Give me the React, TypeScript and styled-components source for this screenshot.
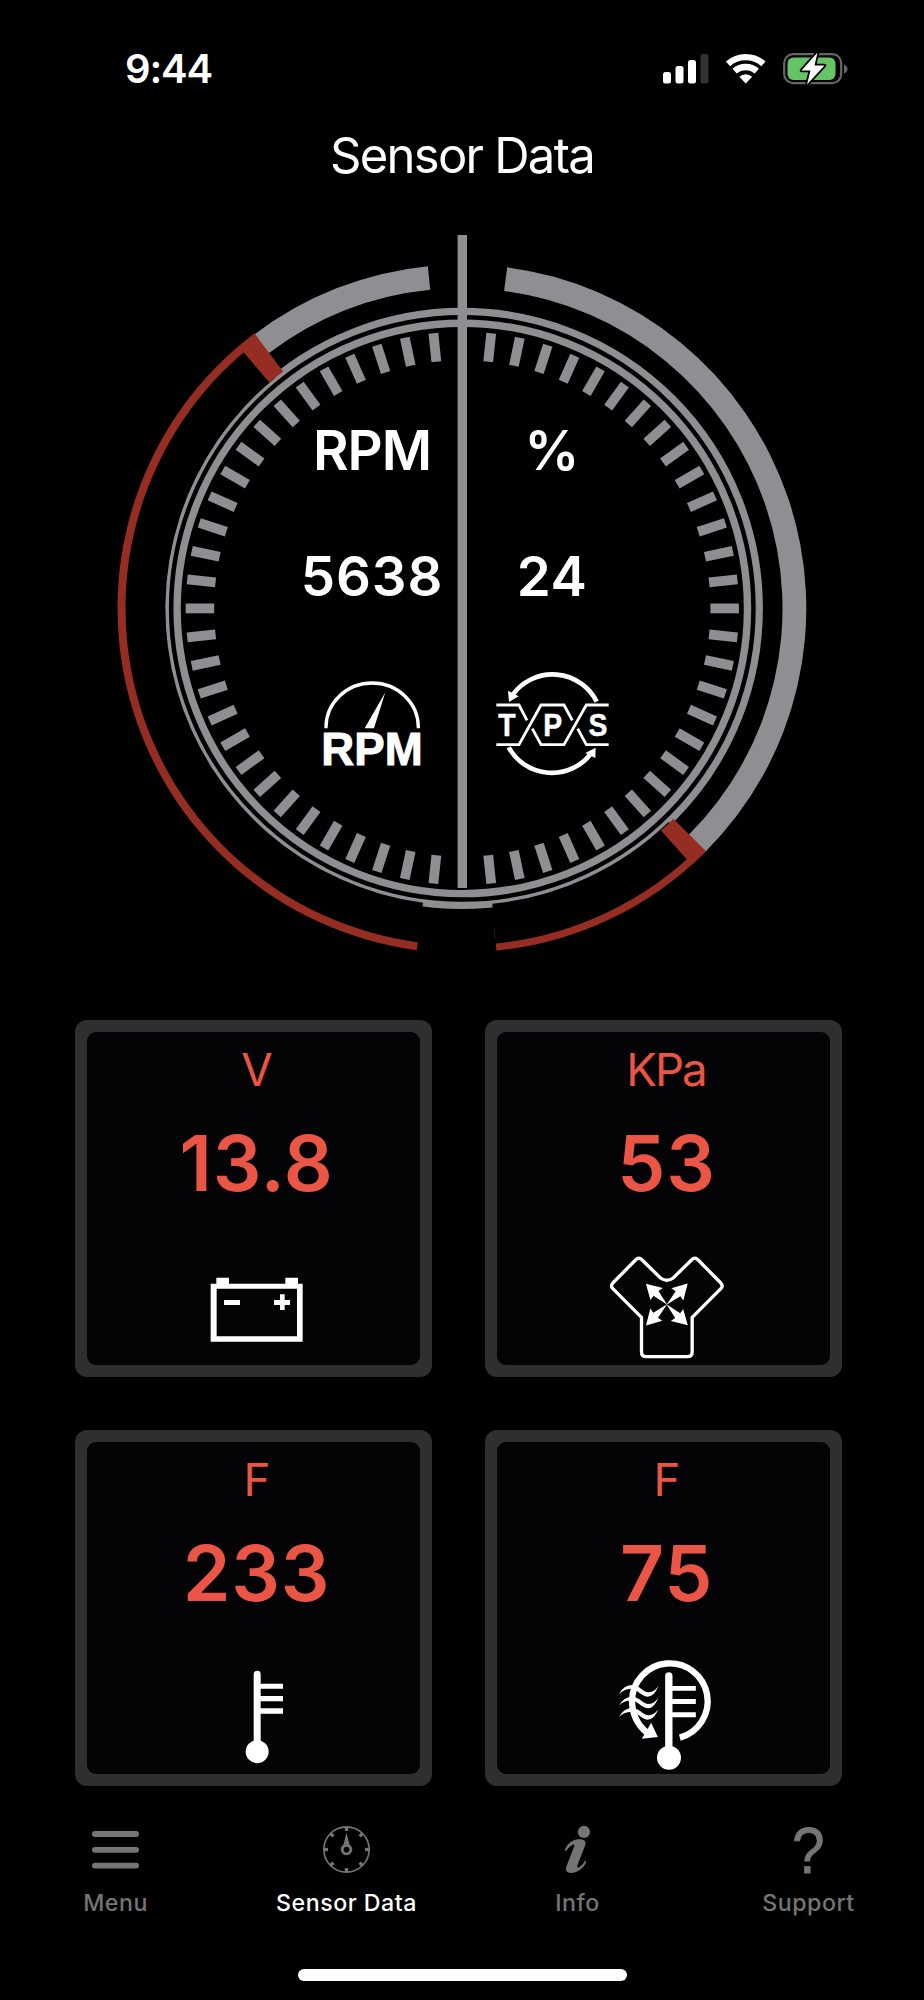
import React from "react";
import styled, { createGlobalStyle } from "styled-components";

const GRAY = "#8e8e93";
const RED = "#962d22";
const CORAL = "#eb5545";
const MUTED = "#757575";

const GlobalStyle = createGlobalStyle`
  body { margin: 0; background: #000; }
  * { box-sizing: border-box; }
  svg { display: block; overflow: visible; }
`;

const Screen = styled.main`
  width: 924px;
  height: 2000px;
  display: flex;
  flex-direction: column;
  overflow: hidden;
  background: #000;
  color: #fff;
  font-family: Inter, "Liberation Sans", sans-serif;
`;

const StatusBar = styled.header`
  height: 125px;
  padding: 12px 76px 0 125px;
  display: flex;
  align-items: center;
  justify-content: space-between;
`;

const Clock = styled.time`
  font-size: 40px;
  font-weight: 600;
  letter-spacing: -1.2px;
`;

const Title = styled.h1`
  margin: 0;
  height: 60px;
  line-height: 61px;
  text-align: center;
  font-size: 49px;
  font-weight: 400;
  letter-spacing: -1.75px;
`;

const GaugeArea = styled.section`
  height: 835px;
  display: grid;
  justify-items: center;
  & > * { grid-area: 1 / 1; }
`;

const Readouts = styled.div`
  display: flex;
  padding-top: 230px;
`;

const Readout = styled.div`
  width: 180px;
  display: flex;
  flex-direction: column;
  align-items: center;
`;

const ReadoutText = styled.div<{ $after: number; $track: number }>`
  height: 70px;
  line-height: 70px;
  margin-bottom: ${(p) => p.$after}px;
  font-size: 54.6px;
  font-weight: 600;
  letter-spacing: ${(p) => p.$track}px;
  white-space: nowrap;
`;

const Cards = styled.section`
  display: grid;
  grid-template-columns: 357px 357px;
  grid-template-rows: 357px 356px;
  gap: 53px;
  padding-left: 75px;
  margin-bottom: 1px;
`;

const Card = styled.article`
  padding: 12px;
  border-radius: 12px;
  background: #2f2f2f;
`;

const CardFace = styled.div`
  height: 100%;
  padding: 12px 0 0 7px;
  border-radius: 9px;
  background: #040406;
  color: ${CORAL};
  display: flex;
  flex-direction: column;
  align-items: center;
`;

const Unit = styled.div`
  height: 52px;
  line-height: 52px;
  font-size: 45.6px;
  letter-spacing: -2px;
  text-indent: -2px;
`;

const Value = styled.div`
  height: 135px;
  line-height: 135px;
  margin-bottom: 19px;
  font-size: 76.6px;
  font-weight: 600;
  letter-spacing: 0.8px;
  text-indent: -0.8px;
`;

const TabBar = styled.nav`
  flex: 1;
  display: flex;
  flex-direction: column;
  align-items: center;
`;

const Tabs = styled.div`
  width: 100%;
  padding-top: 39px;
  display: grid;
  grid-template-columns: repeat(4, 1fr);
`;

const Tab = styled.a<{ $active?: boolean }>`
  display: flex;
  flex-direction: column;
  align-items: center;
  gap: 15px;
  color: ${(p) => (p.$active ? "#fff" : MUTED)};
  font-size: 23.2px;
  font-weight: 500;
  line-height: 30px;
  letter-spacing: 0.5px;
`;

const HomeIndicator = styled.div`
  width: 329px;
  height: 12px;
  margin: auto 0 19px;
  border-radius: 6px;
  background: #fff;
`;

const CX = 462.3;
const CY = 608.4;

// Point on the dial; angles run clockwise from twelve o'clock.
const at = (deg: number, r: number) => {
  const a = (deg * Math.PI) / 180;
  return `${(CX + r * Math.sin(a)).toFixed(2)} ${(CY - r * Math.cos(a)).toFixed(2)}`;
};

// Ring segment between two angles and two radii.
const band = (from: number, to: number, inner: number, outer: number) => {
  const big = Math.abs(to - from) > 180 ? 1 : 0;
  const cw = to > from ? 1 : 0;
  return `M${at(from, outer)}A${outer} ${outer} 0 ${big} ${cw} ${at(to, outer)}L${at(to, inner)}A${inner} ${inner} 0 ${big} ${1 - cw} ${at(from, inner)}Z`;
};

const tickAngles = Array.from({ length: 60 }, (_, i) => i * 6).filter((a) => a % 180 !== 0);

function Dial() {
  return (
    <svg width="924" height="835" viewBox="0 185 924 835">
      <circle cx={CX} cy={CY} r="285.2" fill="none" stroke={GRAY} strokeWidth="7.4" />
      <circle cx={CX} cy={CY} r="297" fill="none" stroke={GRAY} strokeWidth="7.2" />
      <path d={band(136, 174.2, 296.9, 336)} fill="#000" />
      <path d={band(-39, -172.4, 296.9, 336)} fill="#000" />
      {tickAngles.map((a) => (
        <rect
          key={a}
          x={CX - 4.9}
          y={CY - 276.6}
          width="9.8"
          height="28.5"
          fill={GRAY}
          transform={`rotate(${a} ${CX} ${CY})`}
        />
      ))}
      <path d={band(7.5, 135, 320.2, 344)} fill={GRAY} />
      <path d={band(-5.75, -37.2, 320.2, 344)} fill={GRAY} />
      <path d={band(135, 174.3, 336.8, 344)} fill={RED} />
      <path d={band(-37.1, -172.4, 336.8, 344.8)} fill={RED} />
      <path d={band(134.9, 138.2, 298, 344)} fill={RED} />
      <path d={band(-37.1, -40.5, 297, 344)} fill={RED} />
      <path d={`M${at(174.3, 321)}L${at(174.3, 332)}`} stroke="#1d1d1e" strokeWidth="1" />
      <rect x="457.6" y="235" width="9.4" height="653" fill={GRAY} />
    </svg>
  );
}

function RpmIcon() {
  return (
    <svg width="100" height="104.67" viewBox="666 243 300 314" fill="#fff">
      <path d="M678 415V412A138.500 133 0 0 1 955 412V415" fill="none" stroke="#fff" strokeWidth="10" />
      <path d="M856 307L822 415H794Z" />
      <text
        x="664"
        y="525"
        fontSize="141"
        fontWeight="700"
        fontFamily="Liberation Sans, Arial, sans-serif"
        textLength="304"
        lengthAdjust="spacingAndGlyphs"
        stroke="#fff"
        strokeWidth="3"
      >
        RPM
      </text>
    </svg>
  );
}

function TpsIcon() {
  return (
    <svg width="113" height="104.67" viewBox="107 243 339 314" fill="#fff">
      <g fill="none" stroke="#fff">
        <path d="M409 335A148 148 0 0 0 158 313M145 472A148 148 0 0 0 392 491" strokeWidth="14" />
        <path d="M108 345H176L200 391M108 464H176L242 345H311L336 391M216 416L242 464H311L378 345H445M352 416L378 464H445" strokeWidth="8.500" />
      </g>
      <path d="M143 302L175 319L146 336ZM406 473L375 489L405 504Z" />
      <g fontSize="91.5" fontWeight="700" fontFamily="Liberation Sans, Arial, sans-serif" textAnchor="middle" stroke="#fff" strokeWidth="1.5">
        <text transform="translate(140 437) scale(.93 1)">T</text>
        <text transform="translate(277 437) scale(.93 1)">P</text>
        <text transform="translate(413 437) scale(.93 1)">S</text>
      </g>
    </svg>
  );
}

function CardIcon({ left, children }: { left: number; children: React.ReactNode }) {
  return (
    <svg width="120" height="110.67" viewBox={`${left} 720 360 332`} fill="#fff">
      {children}
    </svg>
  );
}

const BatteryIcon = () => (
  <CardIcon left={411}>
    <path fillRule="evenodd" d="M452 821H469V803H507V821H676V803H714V821H728V995H452ZM470 836V979H711V836Z" />
    <path d="M492 870H540V885H492ZM642 870H660V853H674V870H690V885H674V900H660V885H642Z" />
  </CardIcon>
);

const ManifoldIcon = () => (
  <CardIcon left={412.5}>
    <path
      d="M516 922L430 836Q422 828 430 819L498 750Q508 740 518 750L573 804Q592 818 611 804L666 750Q676 740 686 750L754 819Q762 828 754 836L668 922V1026Q668 1040 654 1040H530Q516 1040 516 1026Z"
      fill="none"
      stroke="#fff"
      strokeWidth="10"
    />
    {[0, 90, 180, 270].map((a) => (
      <path key={a} transform={`rotate(${a} 592 883.5)`} d="M529 821L580 834L567 843L593 884.500L552 857L543 870Z" />
    ))}
  </CardIcon>
);

const ThermometerIcon = () => (
  <CardIcon left={411}>
    <path d="M581 763A10.500 10.500 0 0 1 602 763V791H669V806H602V828H669V844H602V865H669V881H602V970H581Z" />
    <circle cx="591.5" cy="995" r="34.500" />
  </CardIcon>
);

const IntakeTempIcon = () => (
  <CardIcon left={412.5}>
    <path d="M587 768A11 11 0 0 1 609 768V798H679V812H609V837H679V852H609V877H679V892H609V985H587Z" />
    <circle cx="598.5" cy="1013.500" r="36" />
    <path d="M631 953A113.500 113.500 0 1 0 487.500 843C488 885 505 915 532 938" fill="none" stroke="#fff" strokeWidth="19" />
    <path d="M565 951L545 908L517 956Z" />
    {[0, 35, 69].map((dy) => (
      <path
        key={dy}
        transform={`translate(0 ${dy})`}
        d="M448 822Q463 795 489 795C512 797 522 818 538 817Q555 815 567 798Q554 830 534 830C515 829 503 806 485 806Q463 807 448 822Z"
      />
    ))}
  </CardIcon>
);

const MenuIcon = () => (
  <svg width="47" height="47" viewBox="0 0 47 47" stroke={MUTED} strokeWidth="5.800" strokeLinecap="round">
    <path d="M2.900 8H44.100M2.900 23.800H44.100M2.900 39.600H44.100" />
  </svg>
);

const SensorIcon = () => (
  <svg width="47" height="47" viewBox="788 78 142 142" fill={MUTED}>
    <circle cx="859" cy="149" r="68.500" fill="none" stroke={MUTED} strokeWidth="5" />
    {[0, 45, 90, 135, 180, 225, 270, 315].map((a) => (
      <rect key={a} x="854" y="80" width="10" height="13" transform={`rotate(${a} 859 149)`} />
    ))}
    <path fillRule="evenodd" d="M859 98L868 134A17.500 17.500 0 1 1 850 134ZM859 141A8.500 8.500 0 1 0 859 158A8.500 8.500 0 1 0 859 141Z" />
  </svg>
);

const InfoIcon = () => (
  <svg width="47" height="47" viewBox="282 78 142 142" fill={MUTED}>
    <circle cx="372.500" cy="96" r="18.500" />
    <path d="M315 149C322 132 336 119 356 118C372 117 381 123 376 137L353 196C351 203 354 206 358 203C364 199 370 192 374 185C376 182 380 183 379 187C374 203 354 220 334 220C320 220 315 212 320 199L343 140C345 134 342 132 338 135C331 139 324 146 321 151C319 154 314 153 315 149Z" />
  </svg>
);

const SupportIcon = () => (
  <svg width="47" height="47" viewBox="0 0 47 47" fill={MUTED}>
    <text
      transform="translate(23.5 46.5) scale(.9 1)"
      fontSize="65"
      textAnchor="middle"
      fontFamily="Liberation Sans, Arial, sans-serif"
      stroke={MUTED}
      strokeWidth="0.8"
    >
      ?
    </text>
  </svg>
);

function StatusIcons() {
  return (
    <svg width="186" height="32" viewBox="662 53 186 32">
      <g fill="#fff">
        <rect x="663" y="72" width="8" height="11.500" rx="2.500" />
        <rect x="675.500" y="66" width="8" height="17.500" rx="2.500" />
        <rect x="688" y="60" width="8" height="23.500" rx="2.500" />
        <rect x="700.500" y="54" width="8" height="29.500" rx="2.500" fill="#333" />
      </g>
      <g fill="none" stroke="#fff" strokeWidth="6.400">
        <path d="M728 63.900A26.400 26.400 0 0 1 763.400 63.900" />
        <path d="M734.600 71.200A16.600 16.600 0 0 1 756.800 71.200" />
      </g>
      <path d="M745.700 83.500L739.300 76.700A9.300 9.300 0 0 1 752.100 76.700Z" fill="#fff" />
      <rect x="784.200" y="54.200" width="57" height="29" rx="9" fill="none" stroke="#666" strokeWidth="2.200" />
      <path d="M844 64.500Q847.500 66 847.500 69T844 73.500Z" fill="#666" />
      <rect x="787.500" y="57.500" width="48" height="22.500" rx="6" fill="#65c466" />
      <path d="M817.500 52.500L801.500 70.500H810.500L807 84.500L824.500 65.500H814.500Z" fill="#fff" stroke="#000" strokeWidth="3.600" paintOrder="stroke" strokeLinejoin="round" />
    </svg>
  );
}

export default function App() {
  return (
    <Screen>
      <GlobalStyle />
      <StatusBar>
        <Clock>9:44</Clock>
        <StatusIcons />
      </StatusBar>
      <Title>Sensor Data</Title>
      <GaugeArea>
        <Dial />
        <Readouts>
          <Readout>
            <ReadoutText $after={56} $track={-1}>RPM</ReadoutText>
            <ReadoutText $after={60} $track={0.9}>5638</ReadoutText>
            <RpmIcon />
          </Readout>
          <Readout>
            <ReadoutText $after={56} $track={0}>%</ReadoutText>
            <ReadoutText $after={60} $track={0.5}>24</ReadoutText>
            <TpsIcon />
          </Readout>
        </Readouts>
      </GaugeArea>
      <Cards>
        <Card><CardFace><Unit>V</Unit><Value>13.8</Value><BatteryIcon /></CardFace></Card>
        <Card><CardFace><Unit>KPa</Unit><Value>53</Value><ManifoldIcon /></CardFace></Card>
        <Card><CardFace><Unit>F</Unit><Value>233</Value><ThermometerIcon /></CardFace></Card>
        <Card><CardFace><Unit>F</Unit><Value>75</Value><IntakeTempIcon /></CardFace></Card>
      </Cards>
      <TabBar>
        <Tabs>
          <Tab><MenuIcon />Menu</Tab>
          <Tab $active><SensorIcon />Sensor Data</Tab>
          <Tab><InfoIcon />Info</Tab>
          <Tab><SupportIcon />Support</Tab>
        </Tabs>
        <HomeIndicator />
      </TabBar>
    </Screen>
  );
}
